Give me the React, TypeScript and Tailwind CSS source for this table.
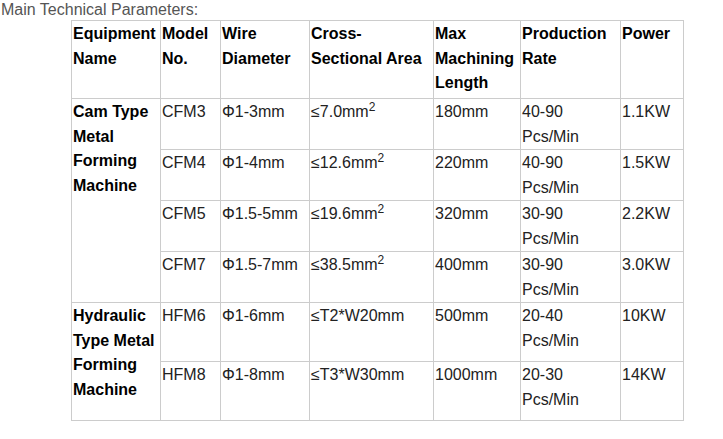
const rows = [
  { model: 'CFM3', wire: 'Φ1-3mm', area: '≤7.0mm', sup: true, len: '180mm', rate: '40-90', power: '1.1KW' },
  { model: 'CFM4', wire: 'Φ1-4mm', area: '≤12.6mm', sup: true, len: '220mm', rate: '40-90', power: '1.5KW' },
  { model: 'CFM5', wire: 'Φ1.5-5mm', area: '≤19.6mm', sup: true, len: '320mm', rate: '30-90', power: '2.2KW' },
  { model: 'CFM7', wire: 'Φ1.5-7mm', area: '≤38.5mm', sup: true, len: '400mm', rate: '30-90', power: '3.0KW' },
  { model: 'HFM6', wire: 'Φ1-6mm', area: '≤T2*W20mm', sup: false, len: '500mm', rate: '20-40', power: '10KW' },
  { model: 'HFM8', wire: 'Φ1-8mm', area: '≤T3*W30mm', sup: false, len: '1000mm', rate: '20-30', power: '14KW' },
];

const td = 'border border-[#cccccc] align-top pl-[1px] pt-[1px]';

export default function App() {
  return (
    <div className="w-[723px] h-[439px] bg-white font-['Liberation_Sans',Arial,sans-serif] text-[16px] leading-[24.5px] text-[#222]">
      <p className="pl-[1px] leading-[20px] text-[#555]">Main Technical Parameters:</p>
      <table className="ml-[71px] table-fixed border-collapse w-[612px]">
        <colgroup>
          <col className="w-[89px]" />
          <col className="w-[60px]" />
          <col className="w-[89px]" />
          <col className="w-[124px]" />
          <col className="w-[87px]" />
          <col className="w-[100px]" />
          <col className="w-[63px]" />
        </colgroup>
        <tbody>
          <tr className="h-[78px] font-bold text-black">
            <td className={td}>Equipment Name</td>
            <td className={td}>Model No.</td>
            <td className={td}>Wire Diameter</td>
            <td className={td}>
              Cross-
              <br />
              Sectional Area
            </td>
            <td className={td}>Max Machining Length</td>
            <td className={td}>Production Rate</td>
            <td className={td}>Power</td>
          </tr>
          {rows.map((r, i) => (
            <tr key={r.model} className={i < 4 ? 'h-[51px]' : 'h-[59px]'}>
              {i === 0 && (
                <td rowSpan={4} className={`${td} font-bold text-black`}>
                  Cam Type Metal Forming Machine
                </td>
              )}
              {i === 4 && (
                <td rowSpan={2} className={`${td} font-bold text-black`}>
                  Hydraulic Type Metal Forming Machine
                </td>
              )}
              <td className={td}>{r.model}</td>
              <td className={td}>{r.wire}</td>
              <td className={td}>
                {r.area}
                {r.sup && <sup>2</sup>}
              </td>
              <td className={td}>{r.len}</td>
              <td className={td}>
                {r.rate}
                <br />
                Pcs/Min
              </td>
              <td className={td}>{r.power}</td>
            </tr>
          ))}
        </tbody>
      </table>
    </div>
  );
}
